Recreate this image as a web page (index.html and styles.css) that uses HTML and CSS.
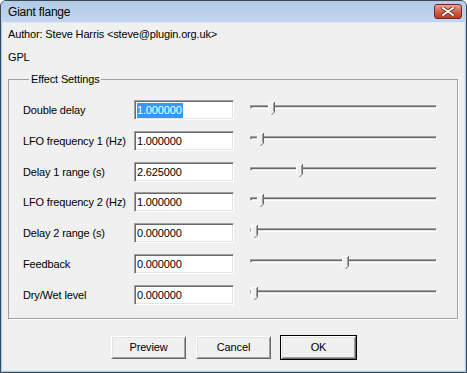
FILE: index.html
```html
<!DOCTYPE html>
<html>
<head>
  <title>Giant flange</title>
  <meta charset="UTF-8">
  <link rel="stylesheet" href="styles.css">
</head>
<body>
  <div class="window">
    <div class="titlebar">
      <span class="title">Giant flange</span>
      <div class="close">
        <svg width="14" height="9" viewBox="0 0 14 9"><path d="M2 1L12 8M12 1L2 8" stroke="#5a2a22" stroke-width="3.4" stroke-linecap="round"/><path d="M2 1L12 8M12 1L2 8" stroke="#fff" stroke-width="2" stroke-linecap="round"/></svg>
      </div>
    </div>
    <div class="client">
      <p class="author">Author: Steve Harris &lt;steve@plugin.org.uk&gt;</p>
      <p class="license">GPL</p>
      <fieldset class="group">
        <legend>Effect Settings</legend>
        <div class="rows">
          <label>Double delay</label>
          <div class="field"><span class="sel">1.000000</span></div>
          <div class="slider"><svg class="thumb" style="left:18px" width="7" height="13" viewBox="0 0 7 13"><path d="M0 0H7V10L3.5 13 0 10Z" fill="#f0f0f0"/><path d="M0.5 10V0.5H6" stroke="#fff" fill="none"/><path d="M6.5 0V10L3.5 13" stroke="#696969" fill="none"/><path d="M5.5 1V9.5" stroke="#a0a0a0"/></svg></div>

          <label>LFO frequency 1 (Hz)</label>
          <div class="field">1.000000</div>
          <div class="slider"><svg class="thumb" style="left:7px" width="7" height="13" viewBox="0 0 7 13"><path d="M0 0H7V10L3.5 13 0 10Z" fill="#f0f0f0"/><path d="M0.5 10V0.5H6" stroke="#fff" fill="none"/><path d="M6.5 0V10L3.5 13" stroke="#696969" fill="none"/><path d="M5.5 1V9.5" stroke="#a0a0a0"/></svg></div>

          <label>Delay 1 range (s)</label>
          <div class="field">2.625000</div>
          <div class="slider"><svg class="thumb" style="left:46px" width="7" height="13" viewBox="0 0 7 13"><path d="M0 0H7V10L3.5 13 0 10Z" fill="#f0f0f0"/><path d="M0.5 10V0.5H6" stroke="#fff" fill="none"/><path d="M6.5 0V10L3.5 13" stroke="#696969" fill="none"/><path d="M5.5 1V9.5" stroke="#a0a0a0"/></svg></div>

          <label>LFO frequency 2 (Hz)</label>
          <div class="field">1.000000</div>
          <div class="slider"><svg class="thumb" style="left:7px" width="7" height="13" viewBox="0 0 7 13"><path d="M0 0H7V10L3.5 13 0 10Z" fill="#f0f0f0"/><path d="M0.5 10V0.5H6" stroke="#fff" fill="none"/><path d="M6.5 0V10L3.5 13" stroke="#696969" fill="none"/><path d="M5.5 1V9.5" stroke="#a0a0a0"/></svg></div>

          <label>Delay 2 range (s)</label>
          <div class="field">0.000000</div>
          <div class="slider"><svg class="thumb" style="left:1px" width="7" height="13" viewBox="0 0 7 13"><path d="M0 0H7V10L3.5 13 0 10Z" fill="#f0f0f0"/><path d="M0.5 10V0.5H6" stroke="#fff" fill="none"/><path d="M6.5 0V10L3.5 13" stroke="#696969" fill="none"/><path d="M5.5 1V9.5" stroke="#a0a0a0"/></svg></div>

          <label>Feedback</label>
          <div class="field">0.000000</div>
          <div class="slider"><svg class="thumb" style="left:92px" width="7" height="13" viewBox="0 0 7 13"><path d="M0 0H7V10L3.5 13 0 10Z" fill="#f0f0f0"/><path d="M0.5 10V0.5H6" stroke="#fff" fill="none"/><path d="M6.5 0V10L3.5 13" stroke="#696969" fill="none"/><path d="M5.5 1V9.5" stroke="#a0a0a0"/></svg></div>

          <label>Dry/Wet level</label>
          <div class="field">0.000000</div>
          <div class="slider"><svg class="thumb" style="left:1px" width="7" height="13" viewBox="0 0 7 13"><path d="M0 0H7V10L3.5 13 0 10Z" fill="#f0f0f0"/><path d="M0.5 10V0.5H6" stroke="#fff" fill="none"/><path d="M6.5 0V10L3.5 13" stroke="#696969" fill="none"/><path d="M5.5 1V9.5" stroke="#a0a0a0"/></svg></div>
        </div>
      </fieldset>
      <div class="buttons">
        <div class="btn">Preview</div>
        <div class="btn">Cancel</div>
        <div class="btn default">OK</div>
      </div>
    </div>
  </div>
</body>
</html>
```
FILE: styles.css
```css
body{
  margin:0;
  font-family:"Liberation Sans", Arial, sans-serif;
  font-size:11px;
  letter-spacing:-0.15px;
  color:#000;
}
.window{
  width:467px;
  height:373px;
  box-sizing:border-box;
  border:1px solid #3c4856;
  border-radius:6px 6px 0 0;
  background:#a9cfea;
  display:flex;
  flex-direction:column;
  overflow:hidden;
}
.titlebar{
  height:22px;
  flex:none;
  display:flex;
  justify-content:space-between;
  align-items:flex-start;
  padding-left:7px;
  background:linear-gradient(#b3cce8,#c2d7ee);
}
.title{
  font-size:12px;
  line-height:22px;
  letter-spacing:-0.2px;
}
.close{
  width:26px;
  height:13px;
  margin:3px 4px 0 0;
  border:1px solid #6b2a1f;
  border-radius:3px;
  background:linear-gradient(#e8a595,#cf6450 50%,#b93c22);
  display:flex;
  align-items:center;
  justify-content:center;
}
.client{
  flex:1;
  margin:0 2px 2px;
  background:#f0f0f0;
  box-shadow:0 0 0 1px #dfeaf4;
  padding:0 1px;
}
.client p{
  margin:0;
  line-height:13px;
  padding-left:4px;
}
.author{ padding-top:5px; }
.license{ margin-top:10px !important; }
.group{
  width:450px;
  box-sizing:border-box;
  margin:9px 0 0 4px;
  padding:14px 0 13px 14px;
  border:1px solid #a0a0a0;
  box-shadow:1px 1px 0 #fff;
  min-width:0;
}
.group legend{
  margin-left:6px;
  padding:0 2px;
  line-height:13px;
}
.rows{
  display:grid;
  grid-template-columns:95px 100px 187px;
  grid-auto-rows:20px;
  column-gap:16px;
  row-gap:10.8px;
  align-items:center;
}
.rows label{
  white-space:nowrap;
}
.field{
  height:20px;
  box-sizing:border-box;
  background:#fff;
  border:1px solid;
  border-color:#a0a0a0 #fff #fff #a0a0a0;
  box-shadow:inset 1px 1px #696969, inset -1px -1px #e3e3e3;
  padding:1px 0 0 2px;
  line-height:16px;
}
.sel{
  display:inline-block;
  background:#3399ff;
  color:#fff;
  padding:0 1px 0 0;
  margin-top:1px;
  line-height:15px;
}
.slider{
  position:relative;
  height:20px;
}
.slider::before{
  content:"";
  position:absolute;
  left:0;
  right:0;
  top:5px;
  height:4px;
  box-sizing:border-box;
  border:1px solid;
  border-color:#a0a0a0 #fff #fff #a0a0a0;
  box-shadow:inset 1px 1px #696969, inset -1px -1px #e3e3e3;
}
.thumb{
  position:absolute;
  top:2px;
  display:block;
}
.buttons{
  display:flex;
  justify-content:center;
  gap:10px;
  margin-top:17px;
}
.btn{
  width:75px;
  height:23px;
  box-sizing:border-box;
  border:1px solid;
  border-color:#fff #696969 #696969 #fff;
  box-shadow:inset 1px 1px #e3e3e3, inset -1px -1px #a0a0a0;
  background:#f0f0f0;
  text-align:center;
  line-height:21px;
}
.btn.default{
  outline:1px solid #000;
  outline-offset:0;
  border-width:1px;
}
```
